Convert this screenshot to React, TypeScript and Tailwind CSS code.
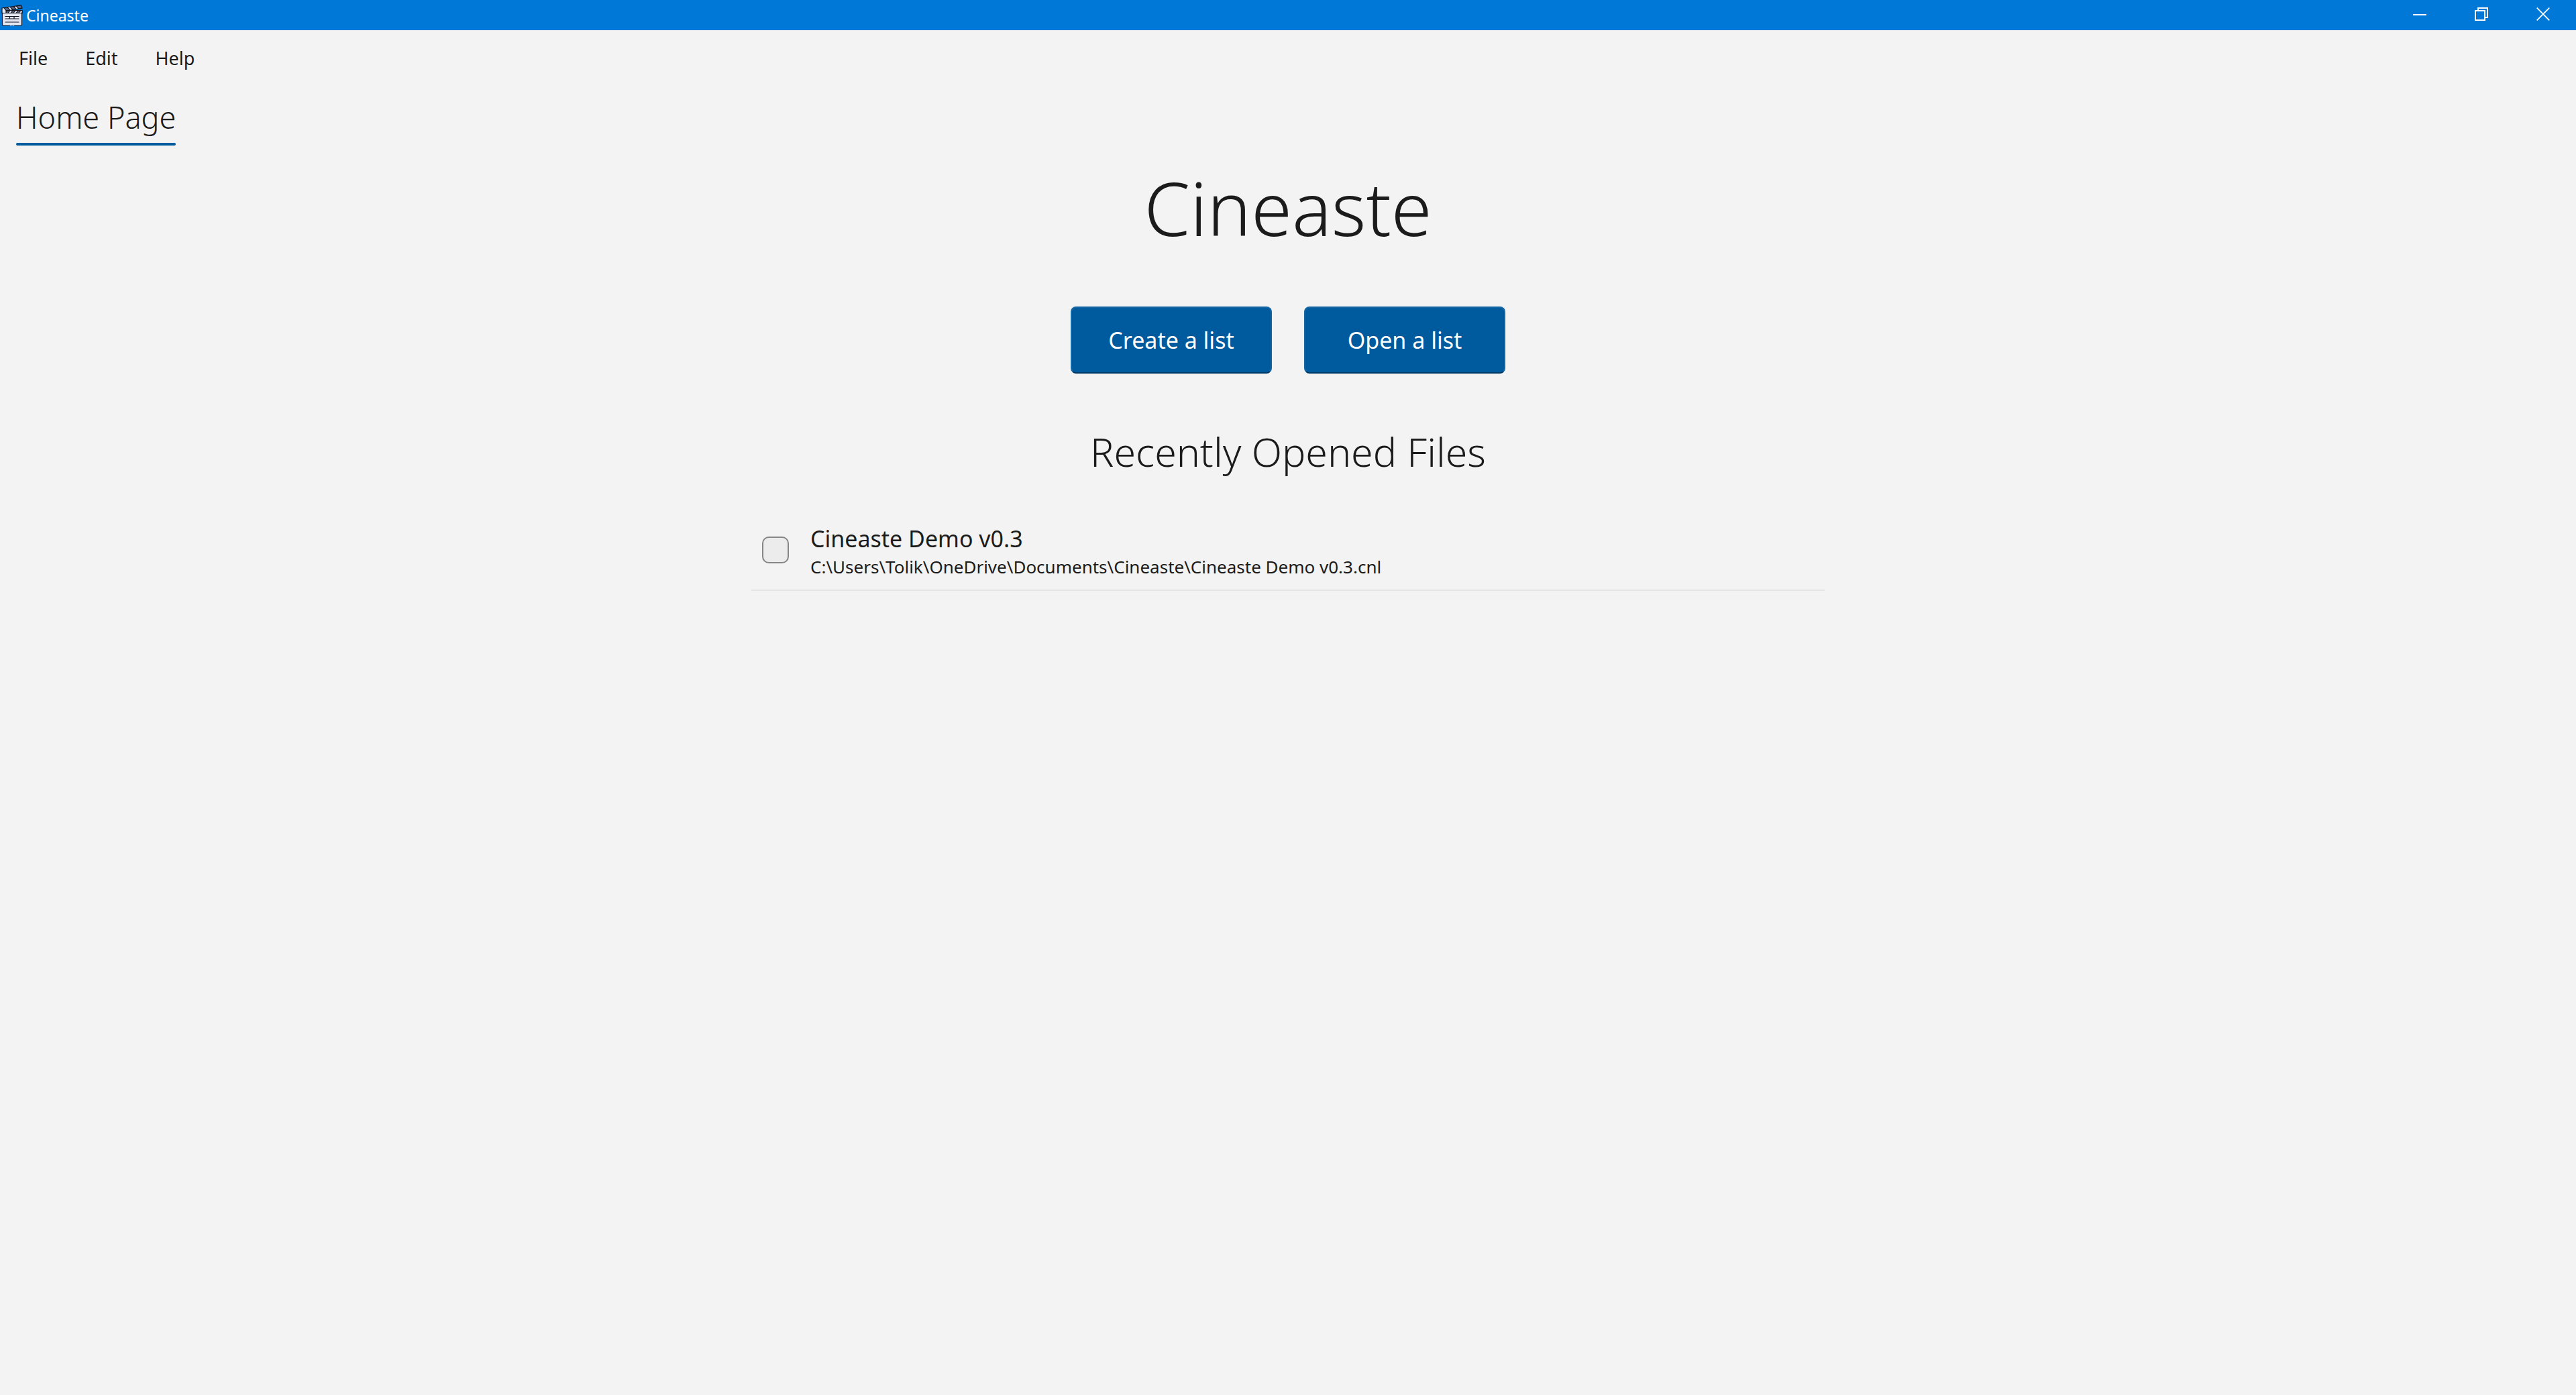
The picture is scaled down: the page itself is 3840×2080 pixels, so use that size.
import type { ReactNode } from 'react';

const menus = ['File', 'Edit', 'Help'];

const recentFiles = [
  {
    name: 'Cineaste Demo v0.3',
    path: 'C:\\Users\\Tolik\\OneDrive\\Documents\\Cineaste\\Cineaste Demo v0.3.cnl',
  },
];

function ClapperIcon() {
  return (
    <svg className="h-8 w-9" viewBox="0 0 36 32" aria-hidden="true">
      <path d="M3.500 12h29v17.500a1.500 1.500 0 0 1-1.500 1.500H5a1.500 1.500 0 0 1-1.500-1.500z" fill="#e4e7f2" />
      <path d="M3 5 31.500.8l1.500 4.400L8.500 10 8 12H3z" fill="#5b6584" />
      <path d="M3 5 6 4.600 9 8v4H3zM11 3.800l4-.600 4 4.600-4 .900zM20 2.500l4-.600 4 4.200-4 .900z" fill="#e4e7f2" />
      <path d="M9 8.500h24v4H9z" fill="#5b6584" />
      <path d="m15 8.500-3 4h4l3-4zM23 8.500l-3 4h4l3-4zM31 8.500l-3 4h4l1-1.500V8.500z" fill="#e4e7f2" />
      <path
        d="M3 12V5L31.500.8l1.500 4.400L9 9.500M6 4.600l3 4V12M11 3.800l4 4.600M15 3.200l4 4.400M20 2.500l4 4.200M24 1.900l4 4M9 8.500h24.200v4H3M15 8.500l-3 4M19 8.500l-3 4M23 8.500l-3 4M27 8.500l-3 4M31 8.500l-3 4M3.500 12v17.500A1.500 1.500 0 0 0 5 31h9.500M32.500 12v17.500A1.500 1.500 0 0 1 31 31h-9.500M18 31h.1"
        fill="none"
        stroke="#11131c"
        strokeWidth="1.200"
        strokeLinecap="round"
        strokeLinejoin="round"
      />
      <path d="M8 17.500h20M8 21h20M8 26h20M14.500 17.500V21M21 17.500V21" fill="none" stroke="#11131c" strokeWidth="1.200" strokeLinecap="round" />
    </svg>
  );
}

function WindowButton({ label, children }: { label: string; children: ReactNode }) {
  return (
    <button type="button" aria-label={label} className="flex w-[92px] items-center justify-center pb-[3px]">
      <svg className="size-5" viewBox="0 0 20 20" fill="none" stroke="#fff" strokeWidth="2">
        {children}
      </svg>
    </button>
  );
}

function TitleBar() {
  return (
    <header className="flex h-[45px] items-stretch justify-between bg-[#0078d7] pr-[3px] text-white">
      <div className="flex items-center gap-[3px]">
        <ClapperIcon />
        <span className="text-[23px] leading-8">Cineaste</span>
      </div>
      <div className="flex">
        <WindowButton label="Minimize">
          <path d="M0 11h20" />
        </WindowButton>
        <WindowButton label="Restore">
          <path d="M1 5h14v14H1zM5 5V1h14v14h-4" />
        </WindowButton>
        <WindowButton label="Close">
          <path d="M.7.7l18.600 18.600M19.300.7.7 19.300" strokeWidth="1.700" />
        </WindowButton>
      </div>
    </header>
  );
}

function MainButton({ children }: { children: ReactNode }) {
  return (
    <button
      type="button"
      className="h-[100px] w-[300px] rounded-lg border-2 border-[#1467a5] border-b-[#003a66] bg-[#005a9e] text-[34px] leading-10 text-white"
    >
      {children}
    </button>
  );
}

export default function App() {
  return (
    <div className="min-h-screen bg-[#f3f3f3] font-['Noto_Sans','Open_Sans',sans-serif] text-[#1b1b1b]">
      <TitleBar />
      <nav className="flex h-[84px] items-center">
        {menus.map((menu) => (
          <button key={menu} type="button" className="px-7 text-[27px] leading-9">
            {menu}
          </button>
        ))}
      </nav>
      <div role="tablist" className="flex px-6 pt-4">
        <button role="tab" aria-selected="true" type="button" className="flex flex-col gap-2">
          <span className="text-[45px] leading-[60px] font-light">Home Page</span>
          <span className="h-1 w-full rounded-full bg-[#005a9e]" />
        </button>
      </div>
      <main className="flex flex-col items-center px-6">
        <h1 className="mt-8 text-[110px] leading-[120px] font-light">Cineaste</h1>
        <div className="mt-[88px] flex gap-12">
          <MainButton>Create a list</MainButton>
          <MainButton>Open a list</MainButton>
        </div>
        <h2 className="mt-[76px] text-[59px] leading-[80px] font-light">Recently Opened Files</h2>
        <ul className="mt-12 w-full max-w-[1600px]">
          {recentFiles.map((file) => (
            <li key={file.path} className="border-b-2 border-[#e5e5e5]">
              <label className="flex h-[118px] items-center gap-8 px-4">
                <input
                  type="checkbox"
                  className="size-10 shrink-0 appearance-none rounded-[10px] border-2 border-[#868686] bg-[#ececec]"
                />
                <span className="flex flex-col pt-2">
                  <span className="text-[34px] leading-[42px]">{file.name}</span>
                  <span className="text-[26px] leading-[42px]">{file.path}</span>
                </span>
              </label>
            </li>
          ))}
        </ul>
      </main>
    </div>
  );
}
